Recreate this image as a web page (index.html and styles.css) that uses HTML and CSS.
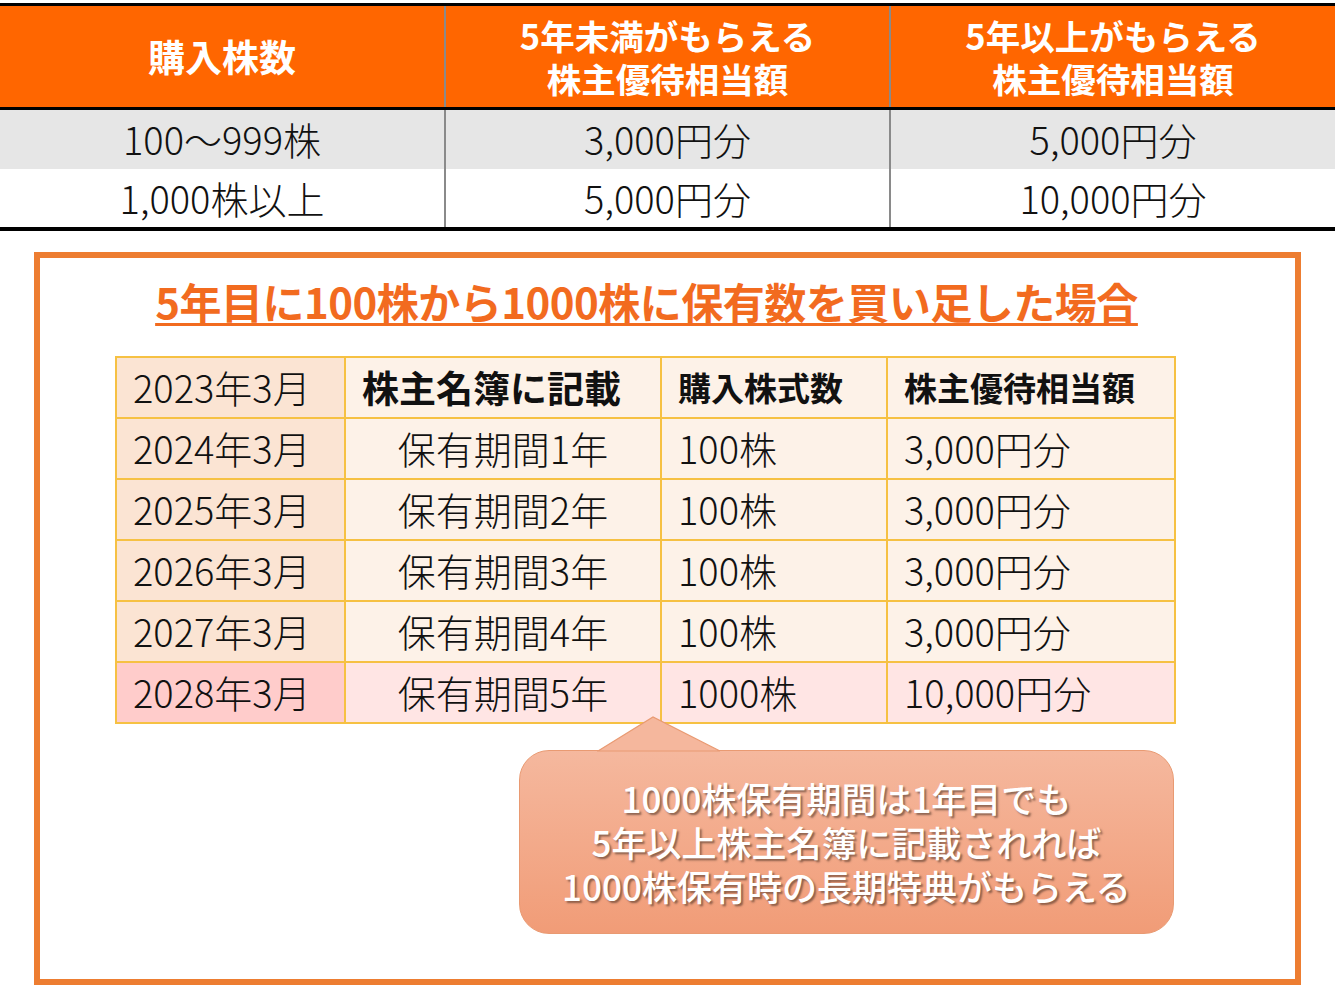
FILE: index.html
```html
<!DOCTYPE html>
<html lang="ja">
<head>
<meta charset="utf-8">
<link rel="stylesheet" href="styles.css">
</head>
<body>
<div class="page">
  <table class="summary">
    <thead>
      <tr>
        <th class="first">購入株数</th>
        <th>5年未満がもらえる<br>株主優待相当額</th>
        <th>5年以上がもらえる<br>株主優待相当額</th>
      </tr>
    </thead>
    <tbody>
      <tr class="grey">
        <td>100～999株</td>
        <td>3,000円分</td>
        <td>5,000円分</td>
      </tr>
      <tr>
        <td>1,000株以上</td>
        <td>5,000円分</td>
        <td>10,000円分</td>
      </tr>
    </tbody>
  </table>

  <section class="example">
    <h2 class="example-title">5年目に100株から1000株に保有数を買い足した場合</h2>
    <table class="timeline">
      <colgroup>
        <col class="c1"><col class="c2"><col class="c3"><col class="c4">
      </colgroup>
      <tr class="head">
        <td class="year">2023年3月</td>
        <th class="big">株主名簿に記載</th>
        <th>購入株式数</th>
        <th>株主優待相当額</th>
      </tr>
      <tr>
        <td class="year">2024年3月</td>
        <td class="center">保有期間1年</td>
        <td>100株</td>
        <td>3,000円分</td>
      </tr>
      <tr>
        <td class="year">2025年3月</td>
        <td class="center">保有期間2年</td>
        <td>100株</td>
        <td>3,000円分</td>
      </tr>
      <tr>
        <td class="year">2026年3月</td>
        <td class="center">保有期間3年</td>
        <td>100株</td>
        <td>3,000円分</td>
      </tr>
      <tr>
        <td class="year">2027年3月</td>
        <td class="center">保有期間4年</td>
        <td>100株</td>
        <td>3,000円分</td>
      </tr>
      <tr class="pink">
        <td class="year">2028年3月</td>
        <td class="center">保有期間5年</td>
        <td>1000株</td>
        <td>10,000円分</td>
      </tr>
    </table>
    <div class="callout">
      <svg class="pointer" width="124" height="36" viewBox="0 0 124 36">
        <polygon points="1,35 56,1 123,35" fill="#F5B79D" stroke="#E99A72" stroke-width="1.2"/>
      </svg>
      <p>1000株保有期間は1年目でも<br>5年以上株主名簿に記載されれば<br>1000株保有時の長期特典がもらえる</p>
    </div>
  </section>
</div>
</body>
</html>
```

FILE: styles.css
```css
* { box-sizing: border-box; }
html, body { margin: 0; padding: 0; background: #fff; }
body {
  font-family: "Noto Sans CJK JP", "Noto Sans", sans-serif;
  color: #111;
  width: 1337px;
  height: 987px;
  overflow: hidden;
}
.page { padding-top: 3px; }

.summary {
  width: 1335px;
  border-collapse: collapse;
  table-layout: fixed;
  border-top: 3px solid #000;
  border-bottom: 4px solid #000;
}
.summary th {
  background: #FF6600;
  color: #fff;
  font-weight: 700;
  font-size: 34.5px;
  line-height: 43px;
  height: 104px;
  padding: 0;
  border-bottom: 3px solid #000;
}
.summary th.first { font-size: 37px; }
.summary td {
  font-size: 38px;
  font-weight: 300;
  line-height: 42px;
  height: 60px;
  padding: 0;
  text-align: center;
}
.summary th + th, .summary td + td { border-left: 2px solid #8a8a8a; }
.summary tr.grey td { background: #E6E6E6; }

.example {
  margin: 21px 0 0 34px;
  width: 1267px;
  height: 733px;
  border: 6px solid #ED7D31;
  display: flex;
  flex-direction: column;
  align-items: flex-start;
  position: relative;
}
.example-title {
  align-self: center;
  margin: 18px 0 0 -42px;
  font-size: 42px;
  line-height: 50px;
  font-weight: 700;
  color: #F26B1F;
  text-decoration: underline;
  text-decoration-thickness: 3px;
  text-underline-offset: 4px;
  letter-spacing: -0.5px;
  white-space: nowrap;
}
.timeline {
  margin: 30px 0 0 75px;
  width: 1059px;
  border-collapse: collapse;
  table-layout: fixed;
}
.timeline col.c1 { width: 229px; }
.timeline col.c2 { width: 316px; }
.timeline col.c3 { width: 226px; }
.timeline col.c4 { width: 288px; }
.timeline td, .timeline th {
  border: 2px solid #F6C143;
  height: 61px;
  padding: 0 0 0 16px;
  font-size: 38px;
  line-height: 42px;
  font-weight: 300;
  text-align: left;
  background: #FDF2E8;
  white-space: nowrap;
}
.timeline th { font-weight: 700; font-size: 33px; }
.timeline th.big { font-size: 37px; }
.timeline td.year { background: #FBE4D3; }
.timeline td.center { text-align: center; padding: 0; }
.timeline tr.pink td { background: #FFE5E4; }
.timeline tr.pink td.year { background: #FFCCCB; }

.callout {
  position: relative;
  margin: 26px 0 0 479px;
  width: 655px;
  height: 184px;
  border-radius: 30px;
  border: 1.5px solid #E99A72;
  background: linear-gradient(#F5B89E, #F19C77);
  display: flex;
  align-items: center;
  justify-content: center;
}
.pointer {
  position: absolute;
  left: 77px;
  top: -35px;
}
.callout p {
  margin: 0;
  text-align: center;
  color: #fff;
  font-size: 35px;
  line-height: 44px;
  font-weight: 500;
  letter-spacing: 0;
  white-space: nowrap;
  text-shadow: 2px 2px 2px rgba(60, 40, 30, 0.55);
}
```
